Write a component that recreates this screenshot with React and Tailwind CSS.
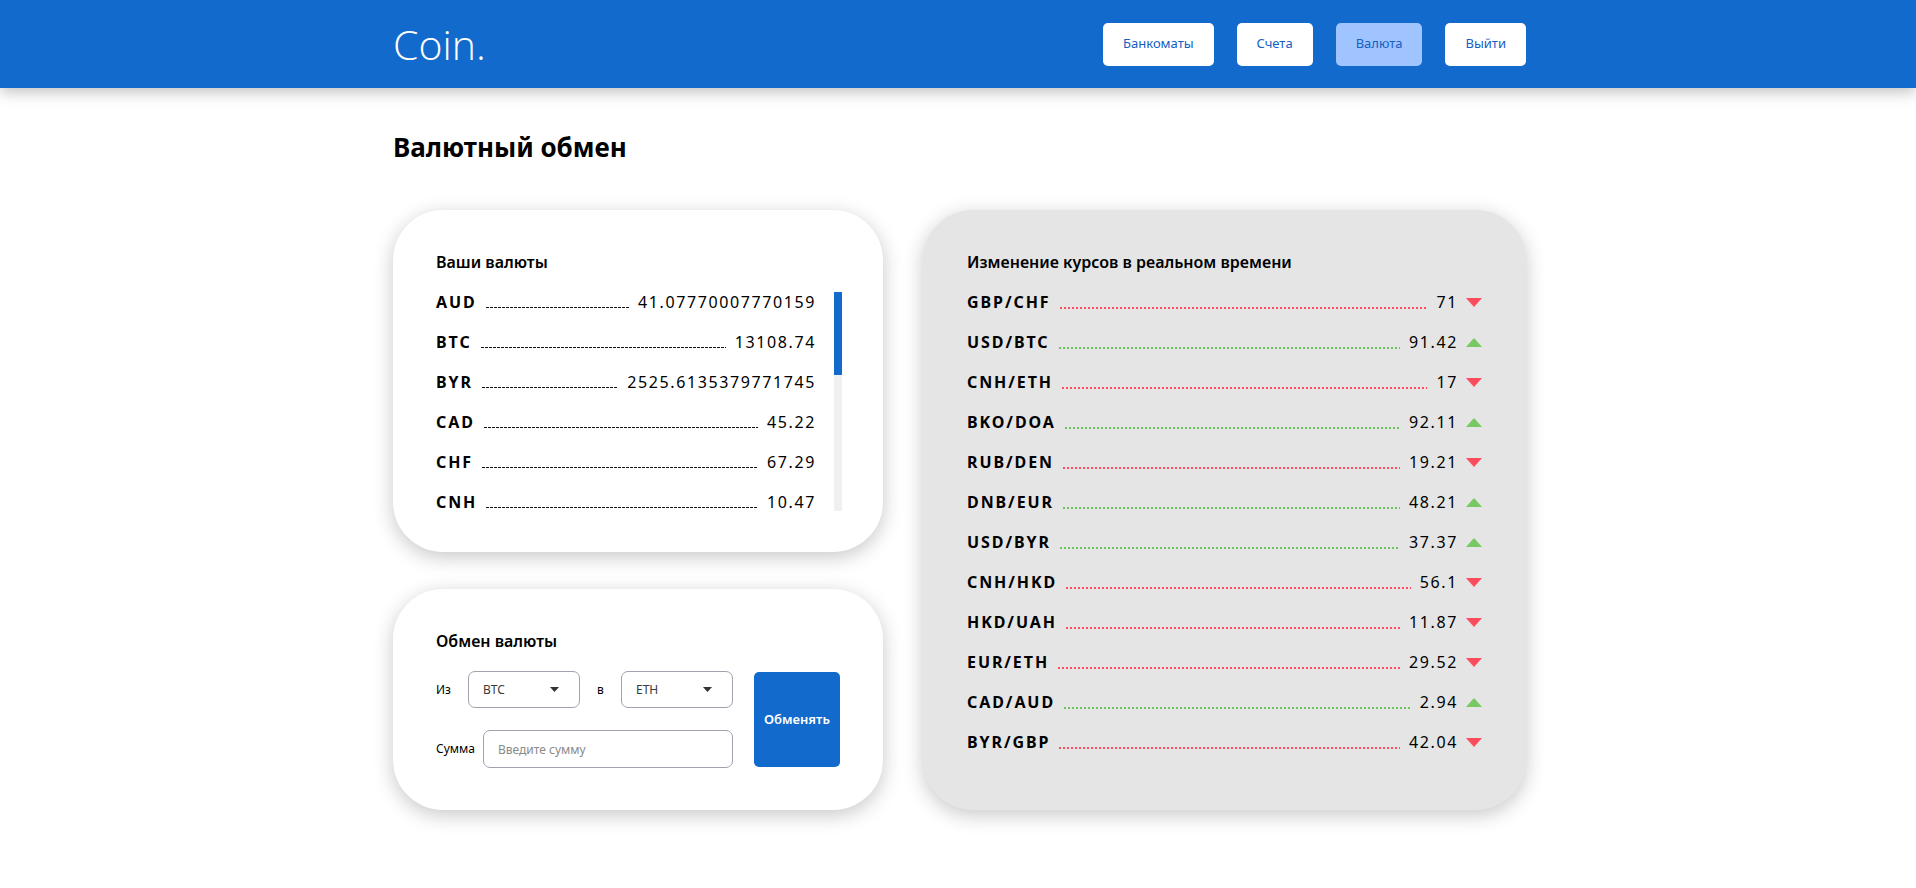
import React, { useState } from 'react';

const balances = [
  { code: 'AUD', amount: '41.07770007770159' },
  { code: 'BTC', amount: '13108.74' },
  { code: 'BYR', amount: '2525.6135379771745' },
  { code: 'CAD', amount: '45.22' },
  { code: 'CHF', amount: '67.29' },
  { code: 'CNH', amount: '10.47' },
  { code: 'CZK', amount: '84.61' },
  { code: 'DKK', amount: '22.05' },
  { code: 'ETH', amount: '3.18' },
  { code: 'EUR', amount: '150.9' },
  { code: 'GBP', amount: '12.4' },
  { code: 'HKD', amount: '77.31' },
  { code: 'JPY', amount: '4093.5' },
  { code: 'RUB', amount: '880.12' },
];

const rates = [
  { pair: 'GBP/CHF', rate: '71', up: false },
  { pair: 'USD/BTC', rate: '91.42', up: true },
  { pair: 'CNH/ETH', rate: '17', up: false },
  { pair: 'BKO/DOA', rate: '92.11', up: true },
  { pair: 'RUB/DEN', rate: '19.21', up: false },
  { pair: 'DNB/EUR', rate: '48.21', up: true },
  { pair: 'USD/BYR', rate: '37.37', up: true },
  { pair: 'CNH/HKD', rate: '56.1', up: false },
  { pair: 'HKD/UAH', rate: '11.87', up: false },
  { pair: 'EUR/ETH', rate: '29.52', up: false },
  { pair: 'CAD/AUD', rate: '2.94', up: true },
  { pair: 'BYR/GBP', rate: '42.04', up: false },
];

const navItems = ['Банкоматы', 'Счета', 'Валюта', 'Выйти'];

function Caret() {
  return (
    <svg width="9" height="5" viewBox="0 0 9 5">
      <path d="M0 0h9L4.5 5z" fill="#333" />
    </svg>
  );
}

function Select({ value }) {
  return (
    <div className="flex h-[37px] w-[112px] shrink-0 items-center justify-between rounded-[7px] border border-[#9ea3ae] pl-[14px] pr-[20px] text-[12px] text-[#3a3a3a]">
      <span>{value}</span>
      <Caret />
    </div>
  );
}

export default function App() {
  const [amount, setAmount] = useState('');

  return (
    <div className="min-h-screen bg-white font-['Noto_Sans',sans-serif] text-black">
      <header className="relative z-10 h-[88px] bg-[#116acc] shadow-[0_4px_14px_rgba(0,0,0,0.25)]">
        <div className="mx-auto flex h-full w-[1136px] items-center justify-between pl-[3px]">
          <span className="font-['Open_Sans',sans-serif] text-[41px] font-light leading-none text-white">Coin.</span>
          <nav className="flex gap-[23px]">
            {navItems.map(item => (
              <button
                key={item}
                className={
                  item === 'Валюта'
                    ? 'h-[43px] rounded-[5px] bg-[#a0c4ff] px-5 text-[13px] text-[#1560c4]'
                    : 'h-[43px] rounded-[5px] bg-white px-5 text-[13px] text-[#1560c4]'
                }
              >
                {item}
              </button>
            ))}
          </nav>
        </div>
      </header>

      <main className="mx-auto w-[1136px] pt-[43px] pb-[60px] pl-[3px]">
        <h1 className="text-[26px] font-bold leading-[32px]">Валютный обмен</h1>

        <div className="mt-[47px] flex gap-[40px]">
          {/* Left column */}
          <div className="flex w-[490px] flex-col gap-[37px]">
            {/* Balances */}
            <section className="rounded-[50px] bg-white pt-[42px] pr-[41px] pb-[41px] pl-[43px] shadow-[0_5px_20px_rgba(0,0,0,0.22)]">
              <h2 className="text-[16px] font-semibold leading-[20px]">Ваши валюты</h2>
              <div className="mt-[20px] flex gap-[18px]">
                <div className="h-[219px] flex-1 overflow-hidden">
                  <ul className="flex flex-col gap-[20px]">
                    {balances.map(b => (
                      <li key={b.code} className="flex items-end leading-[20px]">
                        <span className="text-[16px] font-bold tracking-[0.12em]">{b.code}</span>
                        <span className="mx-[9px] mb-[4px] h-px flex-1 bg-[linear-gradient(to_right,#111_3px,transparent_3px)] bg-[length:4px_1px] bg-repeat-x" />
                        <span className="text-[16px] tracking-[0.1em]">{b.amount}</span>
                      </li>
                    ))}
                  </ul>
                </div>
                <div className="h-[219px] w-[8px] bg-[#f0f0f0]">
                  <div className="h-[83px] w-full bg-[#116acc]" />
                </div>
              </div>
            </section>

            {/* Exchange form */}
            <section className="rounded-[50px] bg-white px-[43px] pt-[42px] pb-[42px] shadow-[0_5px_20px_rgba(0,0,0,0.22)]">
              <h2 className="text-[16px] font-semibold leading-[20px]">Обмен валюты</h2>
              <div className="mt-[20px] flex items-center gap-[21px]">
                <div className="flex w-[297px] flex-col gap-[22px]">
                  <div className="flex items-center text-[12px]">
                    <span className="w-[32px] shrink-0">Из</span>
                    <Select value="BTC" />
                    <span className="ml-[17px] w-[24px] shrink-0">в</span>
                    <Select value="ETH" />
                  </div>
                  <div className="flex items-center text-[12px]">
                    <span className="w-[47px] shrink-0">Сумма</span>
                    <input
                      value={amount}
                      onChange={e => setAmount(e.target.value)}
                      placeholder="Введите сумму"
                      className="h-[38px] min-w-0 flex-1 rounded-[7px] border border-[#9ea3ae] px-[14px] text-[12px] outline-none placeholder:text-[#8a8a8a]"
                    />
                  </div>
                </div>
                <button className="h-[95px] w-[86px] rounded-[5px] bg-[#116acc] text-[13px] font-semibold text-white">
                  Обменять
                </button>
              </div>
            </section>
          </div>

          {/* Rates */}
          <section className="flex-1 rounded-[50px] bg-[#e5e5e5] px-[44px] pt-[42px] pb-[42px] shadow-[0_5px_20px_rgba(0,0,0,0.22)]">
            <h2 className="text-[16px] font-semibold leading-[20px]">Изменение курсов в реальном времени</h2>
            <ul className="mt-[20px] flex flex-col gap-[20px]">
              {rates.map(r => (
                <li key={r.pair} className="flex items-end leading-[20px]">
                  <span className="text-[16px] font-bold tracking-[0.12em]">{r.pair}</span>
                  {r.up ? (
                    <span className="mx-[9px] mb-[3px] h-[2px] flex-1 bg-[linear-gradient(to_right,#6cc65a_2px,transparent_2px)] bg-[length:4px_2px] bg-repeat-x" />
                  ) : (
                    <span className="mx-[9px] mb-[3px] h-[2px] flex-1 bg-[linear-gradient(to_right,#fd4d5d_2px,transparent_2px)] bg-[length:4px_2px] bg-repeat-x" />
                  )}
                  <span className="text-[16px] tracking-[0.1em]">{r.rate}</span>
                  {r.up ? (
                    <span className="ml-[8px] h-0 w-0 self-center border-r-[8px] border-b-[9px] border-l-[8px] border-r-transparent border-b-[#76c963] border-l-transparent" />
                  ) : (
                    <span className="ml-[8px] h-0 w-0 self-center border-t-[9px] border-r-[8px] border-l-[8px] border-t-[#fd4d5d] border-r-transparent border-l-transparent" />
                  )}
                </li>
              ))}
            </ul>
          </section>
        </div>
      </main>
    </div>
  );
}
